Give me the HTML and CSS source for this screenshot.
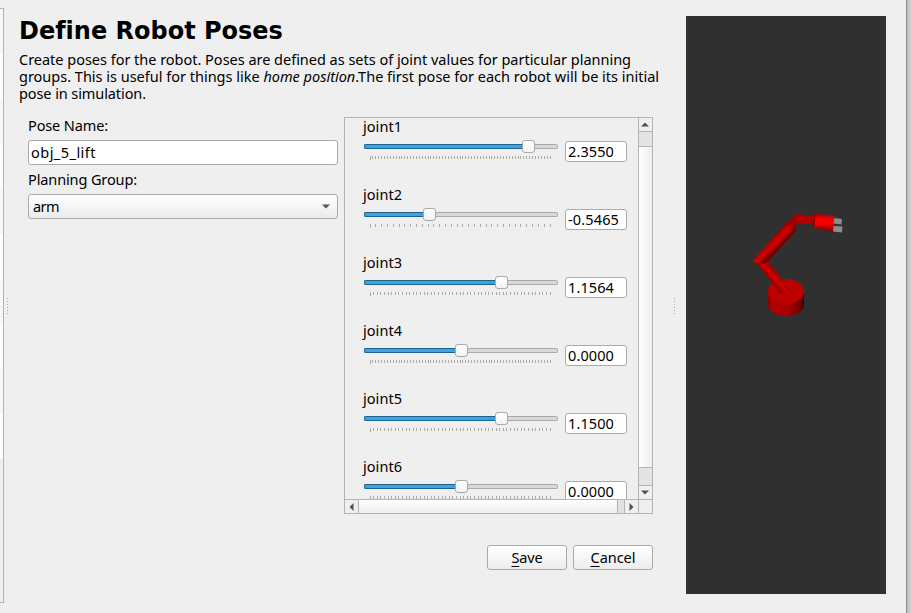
FILE: index.html
```html
<!DOCTYPE html>
<html lang="en">
<head>
<meta charset="utf-8">
<title>Define Robot Poses</title>
<link rel="stylesheet" href="styles.css">
</head>
<body>
<div class="window">
  <div class="nav-edge"></div>
  <div class="splitter"><i></i><i></i><i></i><i></i><i></i><i></i></div>
  <main class="content">
    <h1><span class="fit" data-width="263">Define Robot Poses</span></h1>
    <p class="intro">
      <span class="fit" data-width="612">Create poses for the robot. Poses are defined as sets of joint values for particular planning</span>
      <span class="fit" data-width="640">groups. This is useful for things like <em>home position</em>.The first pose for each robot will be its initial</span>
      <span class="fit" data-width="127">pose in simulation.</span>
    </p>
    <div class="columns">
      <form class="fields">
        <label><span class="fit" data-width="80">Pose Name:</span></label>
        <div class="input"><span class="fit" data-width="65">obj_5_lift</span></div>
        <label><span class="fit" data-width="109">Planning Group:</span></label>
        <div class="select"><span class="fit" data-width="26">arm</span><svg width="8" height="5"><path d="M0 0.5h8L4 4.5z" fill="#555"/></svg></div>
      </form>
      <section class="scroll-area">
        <div class="joints"></div>
        <div class="vbar"><div class="arrow"><svg width="8" height="5"><path d="M0 4.5h8L4 .5z" fill="#505050"/></svg></div><div class="vtrack"><div class="vthumb"></div></div><div class="arrow down"><svg width="8" height="5"><path d="M0 .5h8L4 4.5z" fill="#505050"/></svg></div></div>
        <div class="hbar"><div class="harrow"><svg width="5" height="8"><path d="M4.5 0v8L.5 4z" fill="#505050"/></svg></div><div class="hthumb"></div><div class="hgap"></div><div class="harrow"><svg width="5" height="8"><path d="M.5 0v8l4-4z" fill="#505050"/></svg></div></div>
        <div class="corner"></div>
      </section>
    </div>
    <div class="actions">
      <button><span class="fit" data-width="31"><u>S</u>ave</span></button>
      <button><span class="fit" data-width="45"><u>C</u>ancel</span></button>
    </div>
  </main>
  <div class="splitter right"><i></i><i></i><i></i><i></i><i></i><i></i></div>
  <div class="viewport">
    <svg width="200" height="578" viewBox="686 16 200 578">
      <defs>
        <linearGradient id="base"><stop offset="0" stop-color="#880000"/><stop offset=".1" stop-color="#b00000"/><stop offset=".55" stop-color="#aa0000"/><stop offset=".85" stop-color="#780000"/><stop offset="1" stop-color="#420000"/></linearGradient>
        <linearGradient id="upper" gradientUnits="userSpaceOnUse" x1="772" y1="239" x2="779" y2="246"><stop offset="0" stop-color="#9a0000"/><stop offset=".35" stop-color="#d20000"/><stop offset=".7" stop-color="#c40000"/><stop offset="1" stop-color="#720000"/></linearGradient>
        <linearGradient id="lower" gradientUnits="userSpaceOnUse" x1="778" y1="274" x2="770" y2="281"><stop offset="0" stop-color="#a00000"/><stop offset=".45" stop-color="#d00000"/><stop offset="1" stop-color="#8b0000"/></linearGradient>
        <linearGradient id="wrist" x2="0" y2="1"><stop offset="0" stop-color="#a00000"/><stop offset=".25" stop-color="#e80000"/><stop offset=".55" stop-color="#fa0000"/><stop offset="1" stop-color="#780000"/></linearGradient>
      </defs>
      <path d="M768 292v13c0 6 8 11 18 11s18-5 18-11v-13z" fill="url(#base)"/>
      <ellipse cx="786" cy="291.500" rx="18" ry="12.500" fill="#bd0000"/>
      <path d="M753 262l8-3 6 1 23 29c1 3-3 6-8 5l-3-2-22-28z" fill="url(#lower)"/>
      <path d="M752.500 261l33-38 3-1 8 8-29 32-4 2-8-1z" fill="url(#upper)"/>
      <path d="M787 222.500l10-9.500 3 1-2 9-6 7z" fill="#930000"/>
      <path d="M797 213.500l3-.5 4 3h10v8h-10l-8-1-6 4-1-2z" fill="#b20000"/>
      <path d="M789 223l8-9 3 3-3 6-5 5z" fill="#a00000"/>
      <path d="M813.500 213.500l21 2-1.500 16-20-4z" fill="url(#wrist)"/>
      <path d="M813.500 213.500l2 1-1 13-2-1z" fill="#8c0000"/>
      <path d="M834.500 218l7.500 1-.5 5.500-8-1zM833.500 226l9 .5-.5 6-9-1z" fill="#8c8c8c"/>
    </svg>
  </div>
  <div class="frame-edge"></div>
</div>
<script src="app.js"></script>
</body>
</html>
```
FILE: styles.css
```css
* { box-sizing: border-box; }
body { margin: 0; width: 911px; height: 613px; overflow: hidden; background: #efefef; color: #000; font: 14.5px/17px "Noto Sans", "Open Sans", sans-serif; }
.window { display: flex; height: 613px; }
.nav-edge { width: 4px; height: 595px; margin-top: 8px; border: solid #b4b4b4; border-width: 1px 1px 1px 0; background: linear-gradient(#efefef, #efefef) 0 450px no-repeat, repeating-linear-gradient(#f7f7f7 0 45px, #fff 45px 90px); }
.splitter { width: 15px; padding: 298px 0 0 3px; display: flex; flex-direction: column; gap: 2px; }
.splitter i { width: 1px; height: 1px; background: #aaa; flex: none; }
.content { width: 640px; }
.fit { display: inline-block; white-space: pre; }
h1 { margin: 18px 0 0; font: bold 24px/27px "DejaVu Sans", sans-serif; height: 27px; }
.intro { margin: 6px 0 0; height: 51px; }
.intro .fit { display: block; width: max-content; }
.columns { display: flex; margin-top: 15px; padding-left: 9px; gap: 6px; height: 397px; }
.fields { width: 310px; display: flex; flex-direction: column; }
label { height: 23px; line-height: 17px; }
.input { height: 25px; border: 1px solid #aaa; border-radius: 3px; background: #fff; padding: 3px 2px; margin-bottom: 6px; }
.select { height: 25px; border: 1px solid #aaa; border-radius: 3px; background: linear-gradient(#fff, #ebebeb); padding: 3px 7px 3px 4px; display: flex; justify-content: space-between; align-items: center; }
.scroll-area { width: 309px; height: 397px; border: 1px solid #b4b4b4; display: grid; grid-template: 381px 14px / 293px 14px; }
.joints { overflow: hidden; padding-left: 18px; }
.joint { height: 68px; display: grid; grid-template: 21px 23px / 195px 62px; column-gap: 7px; align-content: start; }
.joint h2 { grid-column: 1 / 3; margin: 0; font-size: inherit; font-weight: normal; line-height: 16px; height: 21px; }
.slider { display: flex; flex-direction: column; padding-left: 1px; }
.rail { display: flex; align-items: center; height: 14px; width: 194px; }
.fill { height: 5px; background: #3ba3e3; border: 1px solid #20638c; border-right: 0; border-radius: 2px 0 0 2px; flex: none; }
.knob { width: 13px; height: 13px; border: 1px solid #aaa; border-radius: 3px; background: linear-gradient(#fff, #f4f4f4); flex: none; }
.rest { flex: 1; height: 5px; border: 1px solid #aaa; border-left: 0; border-radius: 0 2px 2px 0; background: #d7d7d7; }
.ticks { display: block; margin: 3px 0 0 6px; }
.value { height: 21px; margin-top: 2px; border: 1px solid #aaa; border-radius: 3px; background: #fff; padding: 1px 2px; }
.vbar { border-left: 1px solid #b4b4b4; display: flex; flex-direction: column; background: #e4e4e4; }
.arrow { height: 14px; background: #efefef; border-bottom: 1px solid #b4b4b4; display: flex; justify-content: center; align-items: center; padding-right: 1px; }
.arrow.down { border: 0; border-top: 1px solid #b4b4b4; }
.vtrack { flex: 1; padding: 14px 0 17px; }
.vthumb { height: 100%; border: solid #b4b4b4; border-width: 1px 0; background: linear-gradient(90deg, #fff, #efefef); }
.hbar { border-top: 1px solid #b4b4b4; display: flex; }
.harrow { width: 13px; display: flex; align-items: center; justify-content: center; background: #efefef; }
.hthumb { flex: 1; border: solid #b4b4b4; border-width: 0 1px; background: linear-gradient(#fff, #efefef); }
.hgap { width: 7px; background: #e2e2e2; border-right: 1px solid #b4b4b4; }
.corner { border: solid #b4b4b4; border-width: 1px 0 0 1px; }
.actions { display: flex; justify-content: flex-end; gap: 6px; padding-right: 6px; margin-top: 31px; }
button { width: 80px; height: 25px; padding: 0; border: 1px solid #aaa; border-radius: 3px; background: linear-gradient(#fff, #ededed); font: inherit; color: inherit; line-height: 17px; }
u { text-underline-offset: 3px; text-decoration-thickness: 1px; }
.splitter.right { width: 27px; padding-left: 15px; }
.viewport { width: 200px; height: 578px; margin-top: 16px; background: #303030; }
.viewport svg { display: block; }
.frame-edge { margin-left: 20px; width: 5px; border-left: 1px solid #8c8c8c; background: linear-gradient(90deg, #bcbcbc, #d3d3d3); }
```
FILE: app.js
```js
const joints = [
  { value: "2.3550", fill: 158, steps: 62, width: 46 },
  { value: "-0.5465", fill: 59, steps: 31, width: 51 },
  { value: "1.1564", fill: 131, steps: 50, width: 46 },
  { value: "0.0000", fill: 91, steps: 62, width: 46 },
  { value: "1.1500", fill: 131, steps: 50, width: 46 },
  { value: "0.0000", fill: 91, steps: 50, width: 46 }
];

document.querySelector(".joints").innerHTML = joints.map((j, i) => {
  let d = "";
  for (let k = 0; k <= j.steps; k++) {
    const x = Math.floor(k * 180 / j.steps) + 0.5;
    d += `M${x} 0v${k === 0 ? 4 : 3}`;
  }
  return `<div class="joint"><h2><span class="fit" data-width="39">joint${i + 1}</span></h2>
    <div class="slider"><div class="rail"><div class="fill" style="width:${j.fill}px"></div><div class="knob"></div><div class="rest"></div></div>
    <svg class="ticks" width="182" height="4"><path d="${d}" stroke="#aaa"/></svg></div>
    <div class="value"><span class="fit" data-width="${j.width}">${j.value}</span></div></div>`;
}).join("");

// Tracks each label so that it fills its allotted width.
document.querySelectorAll(".fit").forEach(el => {
  const n = el.textContent.length;
  const w = el.getBoundingClientRect().width;
  el.style.letterSpacing = (Number(el.dataset.width) - w) / n + "px";
});
```
